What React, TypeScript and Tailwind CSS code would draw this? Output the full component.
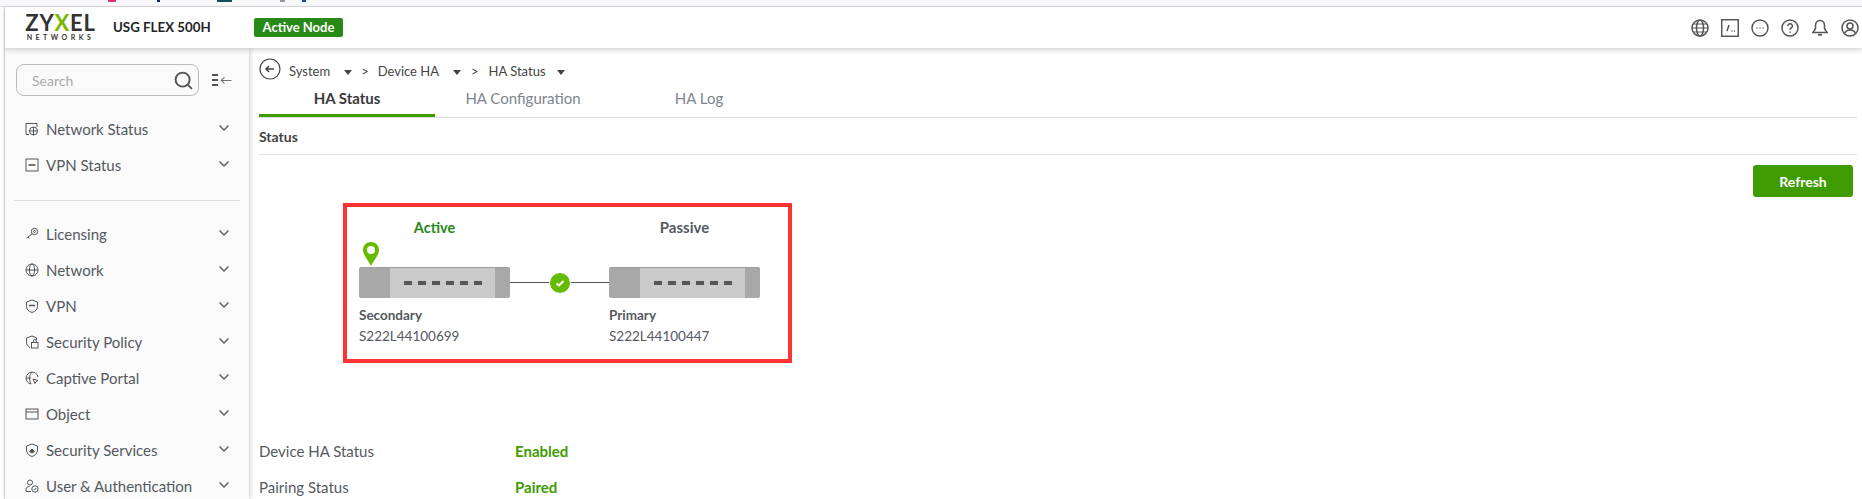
import React from 'react';
import { ChevronDown, Search } from 'lucide-react';

const font = "font-['Lato','Noto_Sans',sans-serif]";

const Ico = ({ children }: { children: React.ReactNode }) => (
  <svg width="14" height="14" viewBox="0 0 14 14" fill="none" stroke="#555" strokeWidth="1" className="shrink-0">
    {children}
  </svg>
);

const statusMenu = [
  {
    label: 'Network Status',
    icon: (
      <Ico>
        <path d="M4 12.5H1V1.5h11V5" />
        <circle cx="8.5" cy="9" r="4" />
        <path d="M4.5 9h8M8.5 5v8" />
      </Ico>
    ),
  },
  {
    label: 'VPN Status',
    icon: (
      <Ico>
        <rect x="1" y="1" width="12" height="12" />
        <path d="M3.5 7h7" strokeWidth="1.6" />
      </Ico>
    ),
  },
];

const mainMenu = [
  {
    label: 'Licensing',
    icon: (
      <Ico>
        <circle cx="9.5" cy="4.5" r="3.2" />
        <circle cx="9.5" cy="4.5" r="1" />
        <path d="M7 7 1.5 11M3 10l1.2 1.5" />
      </Ico>
    ),
  },
  {
    label: 'Network',
    icon: (
      <Ico>
        <circle cx="7" cy="7" r="6" />
        <ellipse cx="7" cy="7" rx="2.6" ry="6" />
        <path d="M1 7h12" />
      </Ico>
    ),
  },
  {
    label: 'VPN',
    icon: (
      <Ico>
        <path d="M7 1 12.5 3v4.5C12.5 10.5 10 12.5 7 13.5 4 12.5 1.5 10.5 1.5 7.5V3z" />
        <path d="M4 6.5h6" strokeWidth="1.5" />
      </Ico>
    ),
  },
  {
    label: 'Security Policy',
    icon: (
      <Ico>
        <path d="M5 12.5C3 11.5 1.5 9.5 1.5 7V3L7 1l4.5 1.8V5" />
        <rect x="6.5" y="7.5" width="6.5" height="5.5" />
        <path d="M8.3 7.5V6a1.5 1.5 0 0 1 3 0v1.5" />
      </Ico>
    ),
  },
  {
    label: 'Captive Portal',
    icon: (
      <Ico>
        <path d="M6 13A6 6 0 1 1 13 6" />
        <path d="M1 7h5M7 1C4 4 4 9 6 13" />
        <path d="M8 8l5 1.5-2 1-1 2z" />
      </Ico>
    ),
  },
  {
    label: 'Object',
    icon: (
      <Ico>
        <rect x="1" y="2" width="12" height="10" />
        <path d="M1 5h12" />
      </Ico>
    ),
  },
  {
    label: 'Security Services',
    icon: (
      <Ico>
        <path d="M7 1 12.5 3v4C12.5 10.5 10 12.5 7 13.5 4 12.5 1.5 10.5 1.5 7V3z" />
        <path d="M4.5 8.5 7 6l2.5 2.5L7 10z" fill="#555" />
      </Ico>
    ),
  },
  {
    label: 'User & Authentication',
    icon: (
      <Ico>
        <circle cx="5" cy="3.5" r="2.5" />
        <path d="M1 12.5V10c0-1.5 1.5-2.5 3.5-2.5" />
        <circle cx="10" cy="10" r="3.2" />
        <path d="M8.7 10l1 1 1.5-2" />
        <path d="M1 12.5h5" />
      </Ico>
    ),
  },
];

const MenuRow = ({ label, icon }: { label: string; icon: React.ReactNode }) => (
  <div className="h-9 flex items-center pl-[20px] pr-[17px]">
    {icon}
    <span className="ml-[7px] flex-1 text-[15px] text-[#55595f] whitespace-nowrap">{label}</span>
    <ChevronDown size={16} strokeWidth={2.5} className="text-[#666] -translate-y-px" />
  </div>
);

const Caret = () => <span className="block w-0 h-0 border-x-[4px] border-x-transparent border-t-[5px] border-t-[#444]" />;

const Switch = ({ secondary }: { secondary?: boolean }) => (
  <div className="w-[151px]">
    <div className="h-[31px] flex rounded-[2px] overflow-hidden bg-[#a8a8a8] border-t border-[#a0a0a0]">
      <div className="w-[31px] shrink-0" />
      <div className="w-[105px] bg-[#cacaca] flex items-center justify-center gap-[6px]">
        {[0, 1, 2, 3, 4, 5].map(i => (
          <span key={i} className="w-[8px] h-1 bg-[#555]" />
        ))}
      </div>
    </div>
    <div className="mt-[7px] text-[13.5px] font-bold text-[#55595f]">{secondary ? 'Secondary' : 'Primary'}</div>
    <div className="mt-px text-[13.5px] text-[#55595f]">{secondary ? 'S222L44100699' : 'S222L44100447'}</div>
  </div>
);

const headerIcon = { width: 18, height: 18, viewBox: '0 0 18 18', fill: 'none', stroke: '#555', strokeWidth: 1.5 };

export default function App() {
  return (
    <div className={`${font} w-[1862px] h-[499px] overflow-hidden bg-white flex flex-col`}>
      <div className="h-[7px] shrink-0 bg-[#f8f8fa] border-b border-[#dcdcdc] flex items-start">
        <span className="ml-[108px] w-[8px] h-[2px] bg-[#e8307a]" />
        <span className="ml-[41px] w-[3px] h-[2px] bg-[#1a2a55]" />
        <span className="ml-[57px] w-[15px] h-[2px] bg-[#12505f]" />
        <span className="ml-[48px] w-[5px] h-[2px] bg-[#999]" />
        <span className="ml-[17px] w-[4px] h-[2px] bg-[#2a4a8a]" />
      </div>
      <div className="flex-1 min-h-0 flex flex-col ml-1 border-l border-[#d8d8d8]">
        <header className="relative z-10 h-[41px] shrink-0 bg-white shadow-[0_2px_5px_rgba(0,0,0,0.18)] flex items-center">
          <div className="ml-[20px] w-[71px] flex flex-col items-center leading-none">
            <span className="text-[22px] font-bold tracking-[0.8px] text-[#333] leading-[18px] whitespace-nowrap">
              ZY<span className="text-[#7ab800]">X</span>EL
            </span>
            <span className="text-[7px] font-bold tracking-[3.5px] text-[#333] leading-[8px] mt-px whitespace-nowrap">NETWORKS</span>
          </div>
          <span className="ml-[17px] w-[98px] text-[13.3px] font-bold text-[#1f2328] whitespace-nowrap">USG FLEX 500H</span>
          <span className="ml-[43px] h-[19px] w-[89px] rounded-[2px] bg-[#278a17] text-white text-[13px] font-bold flex items-center justify-center whitespace-nowrap">Active Node</span>
          <div className="ml-auto mr-[3px] flex items-center gap-[12px]">
            <svg {...headerIcon}>
              <circle cx="9" cy="9" r="8" />
              <ellipse cx="9" cy="9" rx="3.5" ry="8" />
              <path d="M1 9h16M2.5 5h13M2.5 13h13" strokeWidth="1" />
            </svg>
            <svg {...headerIcon}>
              <rect x="0.7" y="0.7" width="16.6" height="16.6" />
              <path d="M8 6 6 12M10.5 12h1M13 12h1" />
            </svg>
            <svg {...headerIcon}>
              <circle cx="9" cy="9" r="8" />
              <path d="M5.5 9h1M8.5 9h1M11.5 9h1" />
            </svg>
            <svg {...headerIcon}>
              <circle cx="9" cy="9" r="8" />
              <path d="M6.8 7a2.3 2.3 0 1 1 3.4 2c-.8.5-1.2 1-1.2 1.8M9 12.5v1.2" />
            </svg>
            <svg {...headerIcon}>
              <path d="M9 1.5c-3 0-4.5 2.5-4.5 5v3L2 13.5h14l-2.5-4v-3c0-2.5-1.500-5-4.500-5z" />
              <path d="M7 15.8h4" strokeWidth="1.8" />
            </svg>
            <svg {...headerIcon}>
              <circle cx="9" cy="9" r="8" />
              <circle cx="9" cy="7" r="3" />
              <path d="M3.5 14.5c1-2.5 3-3.5 5.5-3.5s4.5 1 5.5 3.5" />
            </svg>
          </div>
        </header>
        <div className="flex-1 min-h-0 flex">
          <aside className="w-[244px] shrink-0 bg-[#fafafa] shadow-[1px_0_5px_rgba(0,0,0,0.2)] pt-4">
            <div className="flex items-center pl-[11px]">
              <div className="w-[183px] h-[32px] rounded-lg border border-[#bbb] flex items-center pl-[15px] pr-[4px] justify-between">
                <span className="text-[14px] text-[#aaa]">Search</span>
                <Search size={21} strokeWidth={2.2} className="text-[#555]" />
              </div>
              <div className="ml-[13px] flex items-center gap-[2px]">
                <div className="flex flex-col gap-[3px]">
                  <span className="w-[6px] h-[2px] bg-[#555]" />
                  <span className="w-[6px] h-[2px] bg-[#555]" />
                  <span className="w-[6px] h-[2px] bg-[#555]" />
                </div>
                <span className="text-[12px] leading-none text-[#555]">←</span>
              </div>
            </div>
            <div className="mt-[15px]">
              {statusMenu.map(m => <MenuRow key={m.label} {...m} />)}
            </div>
            <div className="mt-[17px] mb-[15px] mx-[9px] border-t border-[#dcdcdc]" />
            {mainMenu.map(m => <MenuRow key={m.label} {...m} />)}
          </aside>
          <main className="flex-1 min-w-0 pl-[10px] pr-[5px] pt-[10px]">
            <div className="flex h-[22px]">
              <svg width="22" height="22" viewBox="0 0 22 22" fill="none" stroke="#444" strokeWidth="1.2">
                <circle cx="11" cy="11" r="10" />
                <path d="M15 11H7M10 8l-3 3 3 3" strokeWidth="1.5" />
              </svg>
              <div className="pt-[4px] flex items-center h-[24px] text-[13px] text-[#444]">
                <span className="ml-2">System</span>
                <span className="ml-[14px]"><Caret /></span>
                <span className="ml-[9px]">&gt;</span>
                <span className="ml-[9px]">Device HA</span>
                <span className="ml-[14px]"><Caret /></span>
                <span className="ml-[10px]">&gt;</span>
                <span className="ml-[10px]">HA Status</span>
                <span className="ml-[11px]"><Caret /></span>
              </div>
            </div>
            <div className="flex h-[38px] border-b border-[#ddd] text-[15px]">
              <div className="w-[176px] h-[37px] border-b-[3px] border-[#3e9c00] text-center font-bold text-[#3a3a3a] pt-[7px]">HA Status</div>
              <div className="w-[176px] text-center text-[#7d8590] pt-[7px]">HA Configuration</div>
              <div className="w-[176px] text-center text-[#7d8590] pt-[7px]">HA Log</div>
            </div>
            <div className="h-[37px] border-b border-[#e2e2e2] flex items-center text-[14px] font-bold text-[#444]">Status</div>
            <div className="flex justify-end mt-[10px] pr-[4px]">
              <button className="w-[100px] h-8 rounded-[3px] bg-[#3e9c00] text-white text-[14px] font-bold">Refresh</button>
            </div>
            <div className="mt-[6px] ml-[84px] w-[449px] h-[160px] border-[4px] border-[#ff3333] pt-[10px] pl-[12px]">
              <div className="flex">
                <div className="w-[151px] text-center text-[14.5px] leading-[21px] font-bold text-[#278a17]">Active</div>
                <div className="ml-[99px] w-[151px] text-center text-[15px] leading-[21px] font-bold text-[#55595f]">Passive</div>
              </div>
              <div className="relative mt-[4px] flex pt-[25px]">
                <svg width="16" height="24" viewBox="0 0 16 24" className="absolute z-10 left-[4px] top-0">
                  <path d="M8 0C3.5 0 0 3.5 0 8c0 5 5 10 8 16 3-6 8-11 8-16 0-4.5-3.5-8-8-8z" fill="#66bb00" />
                  <circle cx="8" cy="8" r="4" fill="#fff" />
                </svg>
                <Switch secondary />
                <div className="w-[99px] h-[31px] flex items-center">
                  <span className="flex-1 h-px bg-[#555]" />
                  <span className="mx-px w-5 h-5 rounded-full bg-[#66bb00] flex items-center justify-center">
                    <svg width="10" height="10" viewBox="0 0 10 10" fill="none" stroke="#fff" strokeWidth="2">
                      <path d="M1.5 5.5 4 7.5 8.5 3" />
                    </svg>
                  </span>
                  <span className="flex-1 h-px bg-[#555]" />
                </div>
                <Switch />
              </div>
            </div>
            <div className="mt-[70px] flex h-9 items-center text-[15px] text-[#55595f]">
              <span className="w-[256px]">Device HA Status</span>
              <span className="font-bold text-[#3e9c00]">Enabled</span>
            </div>
            <div className="flex h-9 items-center text-[15px] text-[#55595f]">
              <span className="w-[256px]">Pairing Status</span>
              <span className="font-bold text-[#3e9c00]">Paired</span>
            </div>
          </main>
        </div>
      </div>
    </div>
  );
}
